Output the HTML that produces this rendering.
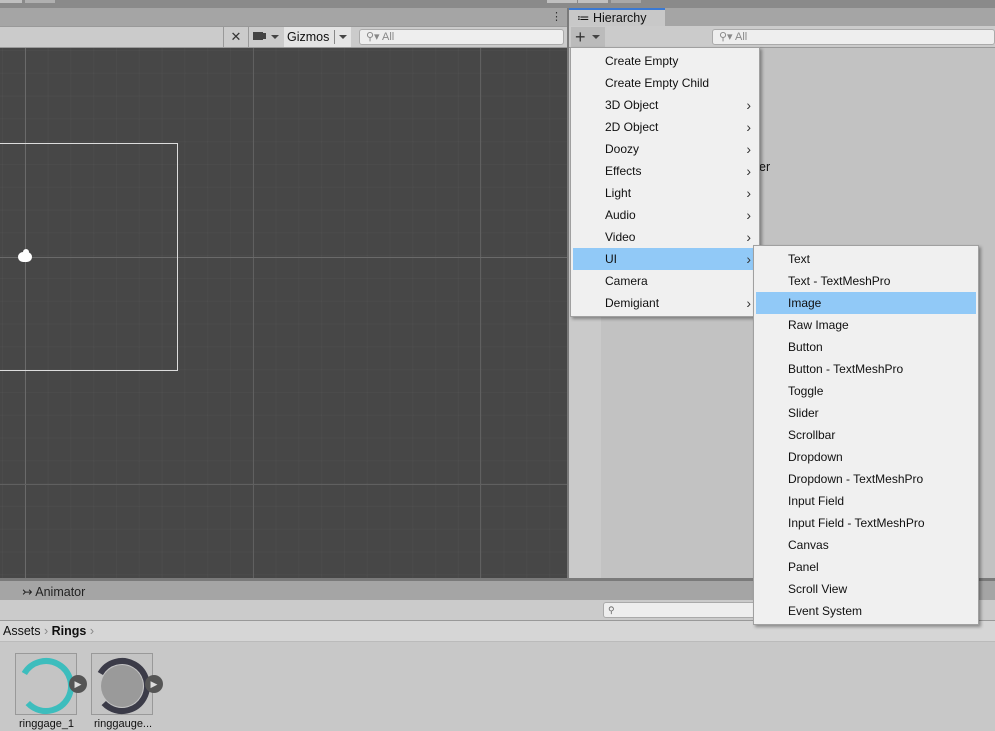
<!DOCTYPE html>
<html><head><style>
*{margin:0;padding:0;box-sizing:border-box}
body{width:995px;height:731px;overflow:hidden;position:relative;background:#c2c2c2;font-family:"Liberation Sans",sans-serif;font-size:12px;color:#101010}
.a{position:absolute}
.menu{position:absolute;background:#f0f0f0;border:1px solid #a0a0a0;box-shadow:2px 2px 3px rgba(0,0,0,.35)}
.it{position:absolute;height:22px;line-height:22px;left:2px;right:2px}
.it span{position:absolute}
.hl{background:#91c9f7}
.arr{position:absolute;right:6px;top:0;color:#333;font-size:14px}
</style></head><body>
<div class="a" style="left:0;top:0;width:995px;height:8px;background:#8a8a8a"></div>
<div class="a" style="left:0;top:0;width:22px;height:3px;background:#c0c0c0"></div>
<div class="a" style="left:25px;top:0;width:30px;height:3px;background:#b0b0b0"></div>
<div class="a" style="left:547px;top:0;width:30px;height:3px;background:#c0c0c0"></div>
<div class="a" style="left:578px;top:0;width:30px;height:3px;background:#c0c0c0"></div>
<div class="a" style="left:611px;top:0;width:30px;height:3px;background:#a8a8a8"></div>
<div class="a" style="left:0;top:8px;width:567px;height:18px;background:#a5a5a5"></div>
<div class="a" style="left:551px;top:10px;font-size:11px;color:#333">⋮</div>
<div class="a" style="left:0;top:26px;width:567px;height:22px;background:#cbcbcb;border-top:1px solid #999;border-bottom:1px solid #999"></div>
<div class="a" style="left:223px;top:27px;width:26px;height:20px;border-left:1px solid #999;border-right:1px solid #999;text-align:center;line-height:20px;font-size:13px;color:#333">✕</div>
<div class="a" style="left:253px;top:32px;width:10px;height:8px;background:#444"></div>
<div class="a" style="left:262px;top:33px;width:4px;height:6px;background:#444"></div>
<div class="a" style="left:271px;top:35px;border:4px solid transparent;border-top:4px solid #444"></div>
<div class="a" style="left:284px;top:27px;width:67px;height:20px;background:#e4e4e4;line-height:20px;padding-left:3px;font-size:12.5px">Gizmos</div>
<div class="a" style="left:334px;top:30px;width:1px;height:14px;background:#888"></div>
<div class="a" style="left:339px;top:35px;border:4px solid transparent;border-top:4px solid #444"></div>
<div class="a" style="left:359px;top:29px;width:205px;height:16px;background:#eee;border:1px solid #aaa;border-radius:3px;color:#888;font-size:11px;line-height:14px;padding-left:6px">⚲▾ All</div>
<div class="a" style="left:0;top:48px;width:567px;height:530px;background:#474747;background-image:linear-gradient(to right,rgba(255,255,255,.025) 1px,transparent 1px),linear-gradient(to bottom,rgba(255,255,255,.025) 1px,transparent 1px);background-size:22.8px 22.8px;background-position:2px 2px;overflow:hidden">
<div class="a" style="left:25px;top:0;width:1px;height:530px;background:#6a6a6a"></div>
<div class="a" style="left:253px;top:0;width:1px;height:530px;background:#606060"></div>
<div class="a" style="left:480px;top:0;width:1px;height:530px;background:#606060"></div>
<div class="a" style="left:0;top:209px;width:567px;height:1px;background:#6a6a6a"></div>
<div class="a" style="left:0;top:436px;width:567px;height:1px;background:#606060"></div>
<div class="a" style="left:-2px;top:95px;width:180px;height:228px;border:1px solid #ddd"></div>
<div class="a" style="left:18px;top:204px;width:14px;height:10px;background:#fff;border-radius:5px"></div>
<div class="a" style="left:23px;top:201px;width:6px;height:6px;background:#fff;border-radius:3px"></div>
</div>
<div class="a" style="left:567px;top:8px;width:2px;height:573px;background:#7a7a7a"></div>
<div class="a" style="left:569px;top:8px;width:426px;height:18px;background:#a5a5a5"></div>
<div class="a" style="left:569px;top:8px;width:96px;height:19px;background:#c8c8c8;border-top:2px solid #3a79d3;line-height:16px;padding-left:8px;font-size:12.5px">≔ Hierarchy</div>
<div class="a" style="left:569px;top:26px;width:426px;height:22px;background:#cbcbcb;border-bottom:1px solid #999"></div>
<div class="a" style="left:571px;top:27px;width:34px;height:20px;background:#bbb;font-size:18px;line-height:20px;padding-left:4px;color:#333">+</div>
<div class="a" style="left:592px;top:35px;border:4px solid transparent;border-top:4px solid #444"></div>
<div class="a" style="left:712px;top:29px;width:283px;height:16px;background:#eee;border:1px solid #aaa;border-radius:3px;color:#888;font-size:11px;line-height:14px;padding-left:6px">⚲▾ All</div>
<div class="a" style="left:569px;top:48px;width:32px;height:530px;background:#cacaca"></div>
<div class="a" style="left:759px;top:160px;font-size:12.5px">er</div>
<div class="a" style="left:0;top:578px;width:995px;height:3px;background:#7a7a7a"></div>
<div class="a" style="left:0;top:581px;width:995px;height:19px;background:#a5a5a5"></div>
<div class="a" style="left:22px;top:584px;font-size:12.5px;color:#222">↣ Animator</div>
<div class="a" style="left:0;top:600px;width:995px;height:21px;background:#cbcbcb;border-bottom:1px solid #999"></div>
<div class="a" style="left:603px;top:602px;width:160px;height:16px;background:#eee;border:1px solid #aaa;border-radius:3px;font-size:9px;color:#666;padding-left:4px;line-height:14px">⚲</div>
<div class="a" style="left:0;top:621px;width:995px;height:21px;background:#d6d6d6;border-bottom:1px solid #bbb;line-height:20px;padding-left:3px;font-size:12.5px">Assets <span style="color:#888">›</span> <b>Rings</b> <span style="color:#888">›</span></div>
<div class="a" style="left:0;top:642px;width:995px;height:89px;background:#c8c8c8"></div>
<div class="a" style="left:15px;top:653px;width:62px;height:62px;background:#c4c4c4;border:1px solid #999"></div>
<svg class="a" style="left:15px;top:653px" width="62" height="62"><circle cx="31" cy="33" r="25" fill="none" stroke="#3dbdbd" stroke-width="6" stroke-dasharray="125 40" transform="rotate(-150 31 33)"/></svg>
<div class="a" style="left:91px;top:653px;width:62px;height:62px;background:#c4c4c4;border:1px solid #999"></div>
<svg class="a" style="left:91px;top:653px" width="62" height="62"><circle cx="31" cy="33" r="21" fill="#9a9a9a"/><circle cx="31" cy="33" r="25" fill="none" stroke="#3b3b48" stroke-width="6" stroke-dasharray="125 40" transform="rotate(-150 31 33)"/></svg>
<div class="a" style="left:69px;top:675px;width:18px;height:18px;border-radius:9px;background:#555;color:#ddd;font-size:9px;text-align:center;line-height:18px">▶</div>
<div class="a" style="left:145px;top:675px;width:18px;height:18px;border-radius:9px;background:#555;color:#ddd;font-size:9px;text-align:center;line-height:18px">▶</div>
<div class="a" style="left:19px;top:718px;font-size:11px">ringgage_1</div>
<div class="a" style="left:94px;top:718px;font-size:11px">ringgauge...</div>
<div class="menu" style="left:570px;top:47px;width:190px;height:270px">
<div class="it" style="top:2px"><span style="left:32px">Create Empty</span></div>
<div class="it" style="top:24px"><span style="left:32px">Create Empty Child</span></div>
<div class="it" style="top:46px"><span style="left:32px">3D Object</span><span class="arr">›</span></div>
<div class="it" style="top:68px"><span style="left:32px">2D Object</span><span class="arr">›</span></div>
<div class="it" style="top:90px"><span style="left:32px">Doozy</span><span class="arr">›</span></div>
<div class="it" style="top:112px"><span style="left:32px">Effects</span><span class="arr">›</span></div>
<div class="it" style="top:134px"><span style="left:32px">Light</span><span class="arr">›</span></div>
<div class="it" style="top:156px"><span style="left:32px">Audio</span><span class="arr">›</span></div>
<div class="it" style="top:178px"><span style="left:32px">Video</span><span class="arr">›</span></div>
<div class="it hl" style="top:200px"><span style="left:32px">UI</span><span class="arr">›</span></div>
<div class="it" style="top:222px"><span style="left:32px">Camera</span></div>
<div class="it" style="top:244px"><span style="left:32px">Demigiant</span><span class="arr">›</span></div>
</div>
<div class="menu" style="left:753px;top:245px;width:226px;height:380px">
<div class="it" style="top:2px"><span style="left:32px">Text</span></div>
<div class="it" style="top:24px"><span style="left:32px">Text - TextMeshPro</span></div>
<div class="it hl" style="top:46px"><span style="left:32px">Image</span></div>
<div class="it" style="top:68px"><span style="left:32px">Raw Image</span></div>
<div class="it" style="top:90px"><span style="left:32px">Button</span></div>
<div class="it" style="top:112px"><span style="left:32px">Button - TextMeshPro</span></div>
<div class="it" style="top:134px"><span style="left:32px">Toggle</span></div>
<div class="it" style="top:156px"><span style="left:32px">Slider</span></div>
<div class="it" style="top:178px"><span style="left:32px">Scrollbar</span></div>
<div class="it" style="top:200px"><span style="left:32px">Dropdown</span></div>
<div class="it" style="top:222px"><span style="left:32px">Dropdown - TextMeshPro</span></div>
<div class="it" style="top:244px"><span style="left:32px">Input Field</span></div>
<div class="it" style="top:266px"><span style="left:32px">Input Field - TextMeshPro</span></div>
<div class="it" style="top:288px"><span style="left:32px">Canvas</span></div>
<div class="it" style="top:310px"><span style="left:32px">Panel</span></div>
<div class="it" style="top:332px"><span style="left:32px">Scroll View</span></div>
<div class="it" style="top:354px"><span style="left:32px">Event System</span></div>
</div>
</body></html>
